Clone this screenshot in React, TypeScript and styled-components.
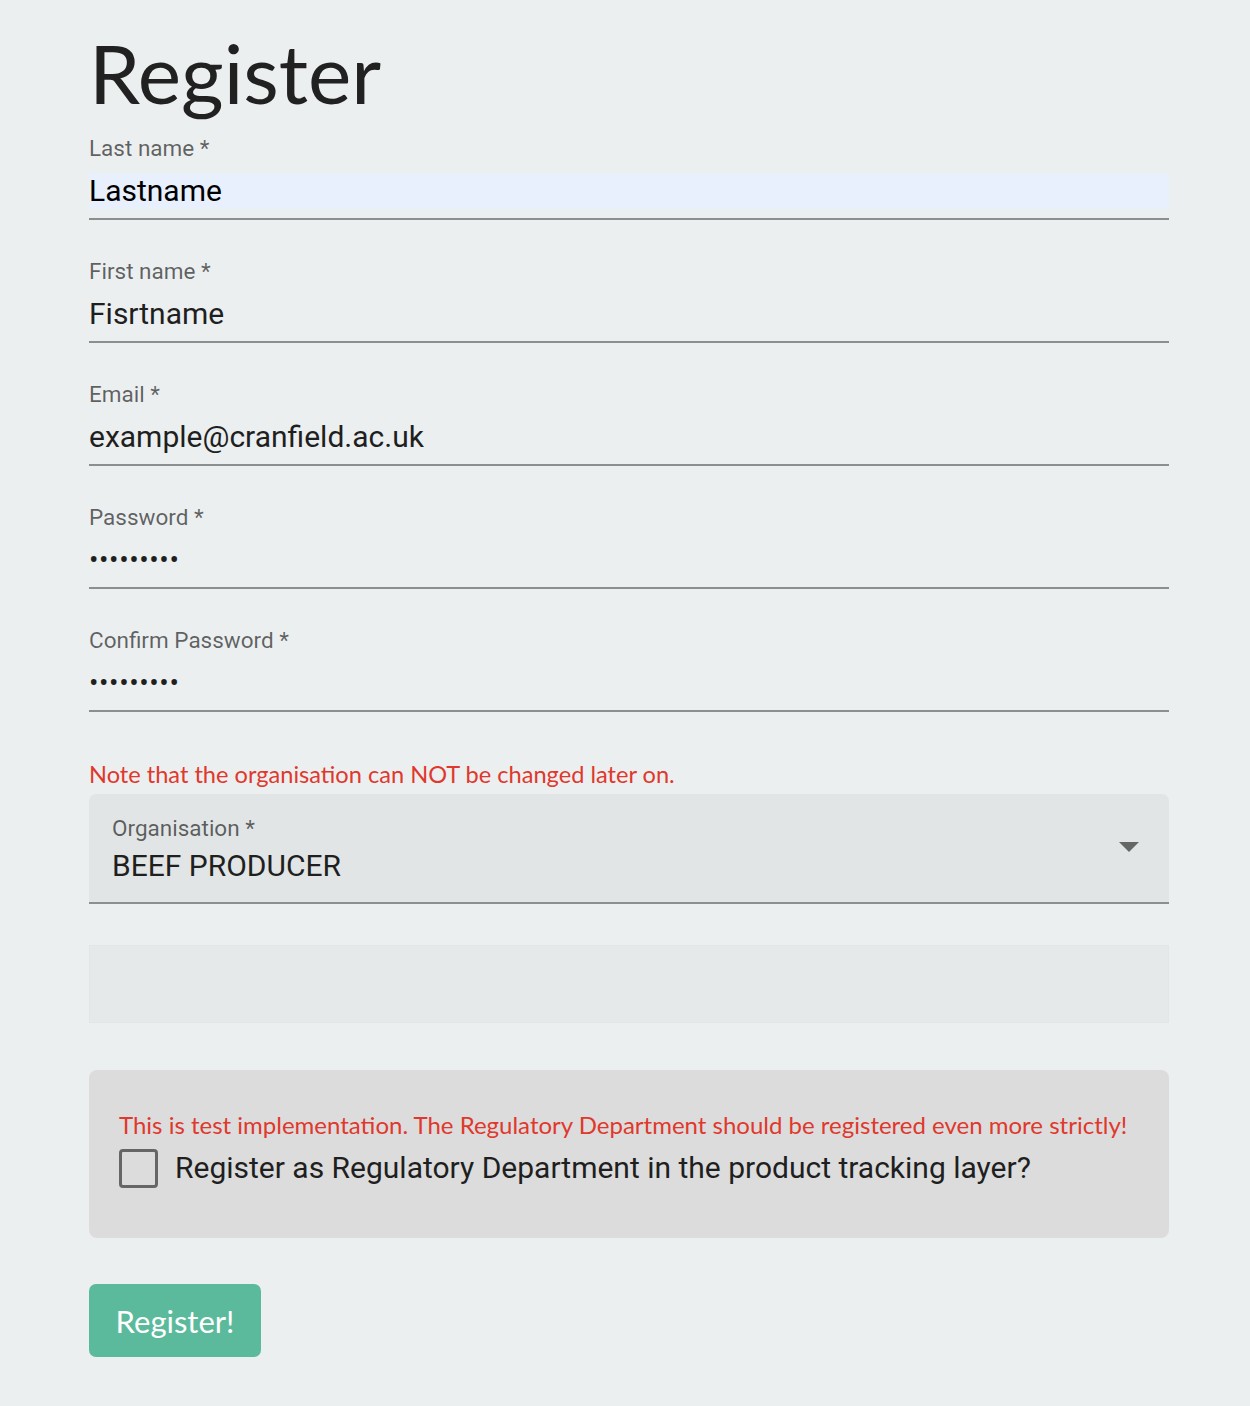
import React from "react";
import styled, { createGlobalStyle } from "styled-components";

const Global = createGlobalStyle`
  html, body { margin: 0; padding: 0; background: #eceff0; }
  body { font-family: Roboto, "Liberation Sans", sans-serif; }
  * { box-sizing: border-box; }
`;

const Page = styled.main`
  width: 1250px;
  min-height: 1406px;
  padding: 32px 81px 0 89px;
  background: #eceff0;
`;

const Title = styled.h1`
  margin: 0 0 23px 0;
  font-family: Lato, "Liberation Sans", sans-serif;
  font-weight: 400;
  font-size: 82px;
  line-height: 81px;
  color: #212121;
`;

const Field = styled.div`
  display: flex;
  flex-direction: column;
  margin-bottom: 39px;
`;

const Label = styled.label`
  font-size: 22.5px;
  line-height: 24px;
  color: rgba(0, 0, 0, 0.6);
`;

const InputBox = styled.div`
  margin-top: 13px;
  padding-bottom: 9px;
  border-bottom: 2px solid #8c8e8f;
`;

const Input = styled.div<{ $autofill?: boolean; $dots?: boolean }>`
  height: 36px;
  font-size: ${(p) => (p.$dots ? "28px" : "30px")};
  line-height: 36px;
  letter-spacing: ${(p) => (p.$dots ? "0.6px" : "0")};
  color: ${(p) => (p.$autofill ? "#000" : "#1f1f1f")};
  background: ${(p) => (p.$autofill ? "#e8f0fe" : "transparent")};
`;

const Note = styled.p`
  margin: 47px 0 5px;
  font-family: Lato, "Liberation Sans", sans-serif;
  font-size: 23.6px;
  line-height: 30px;
  color: #e0382c;
`;

const Select = styled.div`
  position: relative;
  height: 110px;
  padding: 20px 23px 0;
  background: #e2e5e6;
  border-radius: 7px 7px 0 0;
  border-bottom: 2px solid #8c8e8f;
`;

const SelectLabel = styled.div`
  font-size: 22.5px;
  line-height: 28px;
  color: rgba(0, 0, 0, 0.6);
`;

const SelectValue = styled.div`
  margin-top: 6px;
  font-size: 30px;
  line-height: 36px;
  color: #1f1f1f;
`;

const Arrow = styled.svg`
  position: absolute;
  right: 30px;
  top: 48px;
`;

const EmptyBox = styled.div`
  margin-top: 41px;
  height: 78px;
  background: #e6e9ea;
  border: 1px solid #e3e6e7;
`;

const Panel = styled.section`
  margin-top: 47px;
  height: 168px;
  padding: 38px 30px 0;
  background: #dcdcdc;
  border-radius: 8px;
`;

const PanelNote = styled.p`
  margin: 0;
  font-family: Lato, "Liberation Sans", sans-serif;
  font-size: 24px;
  line-height: 34px;
  color: #e0382c;
`;

const CheckRow = styled.label`
  display: flex;
  align-items: center;
  gap: 17px;
  margin-top: 6px;
`;

const Box = styled.span`
  flex: none;
  width: 39px;
  height: 39px;
  border: 3.5px solid #666;
  border-radius: 4px;
`;

const CheckText = styled.span`
  font-size: 30px;
  line-height: 40px;
  color: #1f1f1f;
`;

const Button = styled.button`
  margin-top: 46px;
  width: 172px;
  height: 73px;
  border: none;
  border-radius: 7px;
  background: #5bba9b;
  color: #fff;
  font-family: Lato, "Liberation Sans", sans-serif;
  font-size: 31px;
`;

const fields = [
  { label: "Last name *", value: "Lastname", autofill: true },
  { label: "First name *", value: "Fisrtname" },
  { label: "Email *", value: "example@cranfield.ac.uk" },
  { label: "Password *", value: "•••••••••", dots: true },
  { label: "Confirm Password *", value: "•••••••••", dots: true },
];

export default function App() {
  return (
    <>
      <Global />
      <Page>
        <Title>Register</Title>
        {fields.map((f) => (
          <Field key={f.label}>
            <Label>{f.label}</Label>
            <InputBox>
              <Input $autofill={f.autofill} $dots={f.dots}>
                {f.value}
              </Input>
            </InputBox>
          </Field>
        ))}
        <Note>Note that the organisation can NOT be changed later on.</Note>
        <Select>
          <SelectLabel>Organisation *</SelectLabel>
          <SelectValue>BEEF PRODUCER</SelectValue>
          <Arrow width="20" height="10" viewBox="0 0 20 10">
            <path d="M0 0 L20 0 L10 10 Z" fill="#666" />
          </Arrow>
        </Select>
        <EmptyBox />
        <Panel>
          <PanelNote>
            This is test implementation. The Regulatory Department should be registered even more strictly!
          </PanelNote>
          <CheckRow>
            <Box />
            <CheckText>Register as Regulatory Department in the product tracking layer?</CheckText>
          </CheckRow>
        </Panel>
        <Button>Register!</Button>
      </Page>
    </>
  );
}
